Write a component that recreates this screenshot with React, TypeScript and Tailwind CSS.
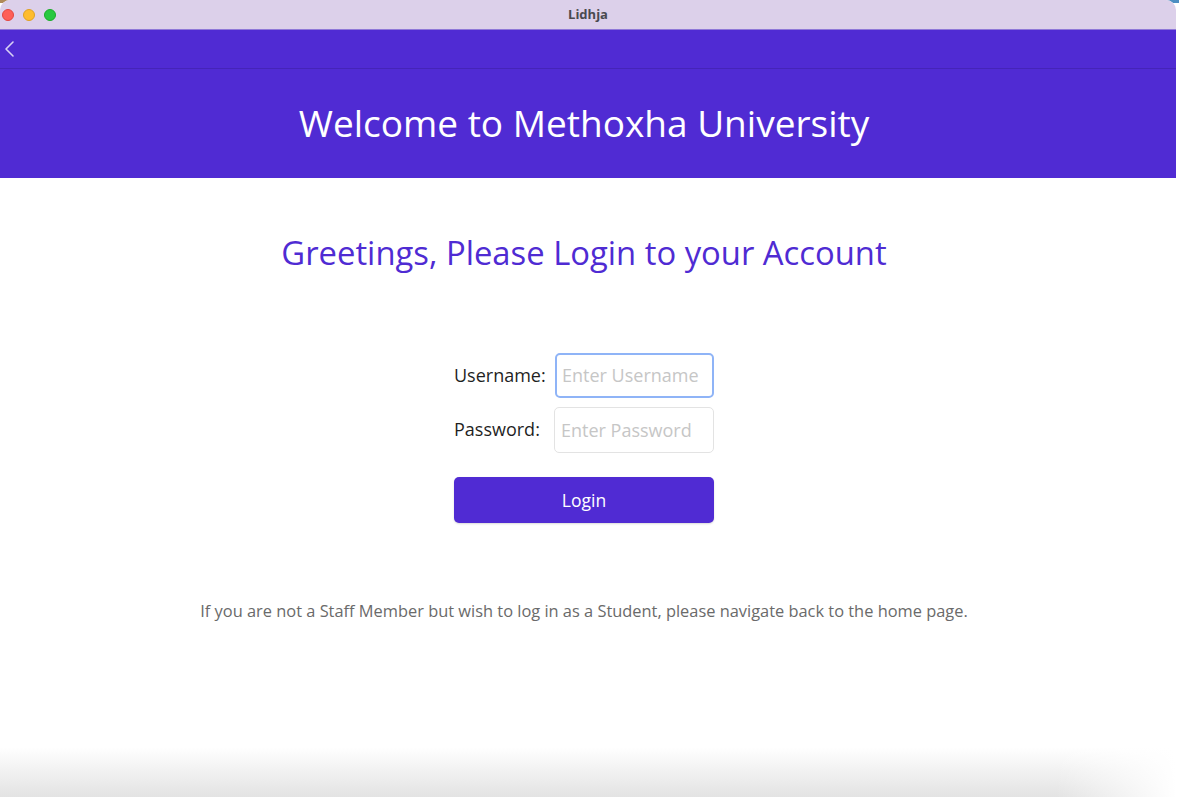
import React from "react";

export default function App() {
  const font = { fontFamily: '"Open Sans", "Noto Sans", sans-serif' };
  return (
    <div className="w-[1179px] h-[800px] bg-white relative overflow-hidden" style={font}>
      <div className="absolute left-0 top-0 w-[1179px] h-[3px] bg-gradient-to-r from-[#b08a5a] via-[#9c9070] to-[#4d8fc2]" />
      <div className="absolute left-0 top-0 w-[1176px] h-[797px] rounded-t-[10px] overflow-hidden flex flex-col bg-white">
        <div className="h-[30px] shrink-0 bg-[#dcd0ea] flex items-center relative border-b border-[#8f78d8]">
          <div className="flex items-center gap-[9px] pl-[2px]">
            <span className="w-[12px] h-[12px] rounded-full bg-[#fe5f57] border border-[#e2463f]" />
            <span className="w-[12px] h-[12px] rounded-full bg-[#febc2e] border border-[#dea123]" />
            <span className="w-[12px] h-[12px] rounded-full bg-[#28c840] border border-[#1aab29]" />
          </div>
          <div className="absolute inset-0 flex items-center justify-center text-[13px] font-bold text-[#4a4a4f]">
            Lidhja
          </div>
        </div>
        <div className="h-[39px] shrink-0 bg-[#502bd3] border-b border-[#4524b8] flex items-center pl-[4px]">
          <svg width="12" height="18" viewBox="0 0 12 18" fill="none">
            <path d="M9 2 L2 9 L9 16" stroke="#d8d0f4" strokeWidth="1.6" strokeLinecap="round" strokeLinejoin="round" />
          </svg>
        </div>
        <div className="h-[109px] shrink-0 bg-[#502bd3] flex items-center justify-center pr-[8px]">
          <h1 className="text-white text-[37px] leading-none pb-[2px]">Welcome to Methoxha University</h1>
        </div>
        <div className="flex-1 flex flex-col items-center relative pr-[8px]">
          <h2 className="text-[#4f2bd3] text-[32.8px] leading-none mt-[59px]">
            Greetings, Please Login to your Account
          </h2>
          <div className="mt-[83px] flex flex-col gap-[9px] w-[260px]">
            <div className="flex items-center">
              <label className="text-[18px] text-[#1f1f1f] w-[101px]">Username:</label>
              <input
                placeholder="Enter Username"
                className="w-[159px] h-[45px] rounded-[5px] border-2 border-[#8fb4f7] px-[5px] text-[18px] text-[#333] placeholder:text-[#c6c6c6] outline-none"
              />
            </div>
            <div className="flex items-center">
              <label className="text-[18px] text-[#1f1f1f] w-[100px]">Password:</label>
              <input
                placeholder="Enter Password"
                type="password"
                className="w-[160px] h-[46px] rounded-[5px] border border-[#e3e3e3] px-[6px] text-[18px] text-[#333] placeholder:text-[#c6c6c6] outline-none"
              />
            </div>
            <button className="mt-[15px] w-[260px] h-[46px] rounded-[5px] bg-[#502bd3] text-white text-[17.5px] shadow-[0_1px_2px_rgba(0,0,0,0.15)]">
              Login
            </button>
          </div>
          <p className="mt-[76px] text-[16.4px] text-[#6a6a6a]">
            If you are not a Staff Member but wish to log in as a Student, please navigate back to the home page.
          </p>
          <div className="absolute left-0 right-0 bottom-0 h-[50px] bg-gradient-to-b from-white to-[#e3e3e3]" />
          <div className="absolute right-0 bottom-0 w-[120px] h-[50px] bg-gradient-to-r from-transparent to-white" />
        </div>
      </div>
    </div>
  );
}
